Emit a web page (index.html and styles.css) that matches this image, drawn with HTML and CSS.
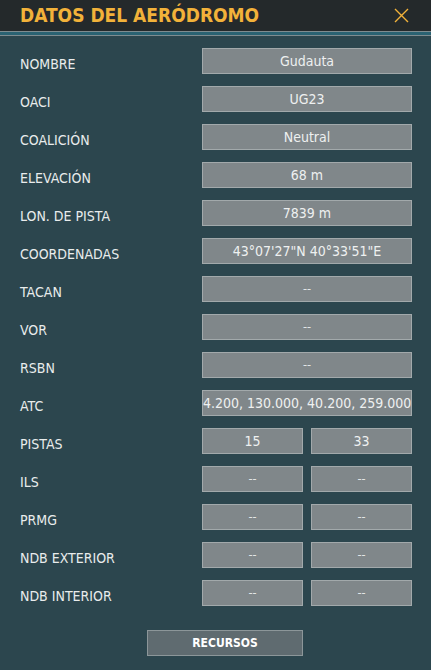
FILE: index.html
```html
<!DOCTYPE html>
<html lang="es">
<head>
<meta charset="utf-8">
<title>Datos del aeródromo</title>
<link rel="stylesheet" href="styles.css">
</head>
<body>
<div class="window">
  <header class="header">
    <h1 class="title">DATOS DEL AERÓDROMO</h1>
    <button class="close" aria-label="Cerrar">
      <svg width="15" height="15" viewBox="0 0 15 15"><path d="M1 1 L14 14 M14 1 L1 14" stroke="#f2b23a" stroke-width="1.4" fill="none"/></svg>
    </button>
  </header>
  <div class="divider"></div>
  <main class="content">
    <div class="rows">
      <div class="label">NOMBRE</div><div class="field">Gudauta</div>
      <div class="label">OACI</div><div class="field">UG23</div>
      <div class="label">COALICIÓN</div><div class="field">Neutral</div>
      <div class="label">ELEVACIÓN</div><div class="field">68 m</div>
      <div class="label">LON. DE PISTA</div><div class="field">7839 m</div>
      <div class="label">COORDENADAS</div><div class="field">43°07'27"N 40°33'51"E</div>
      <div class="label">TACAN</div><div class="field dash">--</div>
      <div class="label">VOR</div><div class="field dash">--</div>
      <div class="label">RSBN</div><div class="field dash">--</div>
      <div class="label">ATC</div><div class="field">4.200, 130.000, 40.200, 259.000</div>
      <div class="label">PISTAS</div><div class="pair"><div class="field">15</div><div class="field">33</div></div>
      <div class="label">ILS</div><div class="pair"><div class="field dash">--</div><div class="field dash">--</div></div>
      <div class="label">PRMG</div><div class="pair"><div class="field dash">--</div><div class="field dash">--</div></div>
      <div class="label">NDB EXTERIOR</div><div class="pair"><div class="field dash">--</div><div class="field dash">--</div></div>
      <div class="label">NDB INTERIOR</div><div class="pair"><div class="field dash">--</div><div class="field dash">--</div></div>
    </div>
    <div class="actions">
      <button class="btn">RECURSOS</button>
    </div>
  </main>
</div>
</body>
</html>
```

FILE: styles.css
```css
html, body {
  margin: 0;
  padding: 0;
  background: #2c464e;
  font-family: "DejaVu Sans Condensed", "DejaVu Sans", sans-serif;
  font-stretch: condensed;
}
.window {
  width: 431px;
  min-height: 670px;
  background: #2c464e;
}
.header {
  height: 31px;
  background: #24292b;
  display: flex;
  align-items: center;
  justify-content: space-between;
  padding: 0 22px 0 20px;
  box-sizing: border-box;
}
.title {
  margin: 0;
  font-size: 19px;
  font-weight: 700;
  color: #f2b23a;
  line-height: 31px;
}
.close {
  background: none;
  border: 0;
  padding: 0;
  width: 15px;
  height: 15px;
  display: flex;
}
.divider {
  height: 3px;
  background: #2a6272;
  border-top: 1px solid #7f8c90;
  border-bottom: 1px solid #7f8c90;
}
.content {
  padding: 12px 19px 0 20px;
}
.rows {
  display: grid;
  grid-template-columns: 182px 210px;
  grid-auto-rows: 26px;
  row-gap: 12px;
}
.label {
  color: #e9ecec;
  font-size: 14px;
  line-height: 18px;
  padding-top: 7px;
  white-space: nowrap;
}
.field {
  background: #80878a;
  border: 1px solid #a2a9ab;
  box-sizing: border-box;
  height: 26px;
  color: #eef0f0;
  font-size: 14px;
  line-height: 24px;
  text-align: center;
  white-space: nowrap;
  overflow: hidden;
}
.field.dash {
  font-size: 12.5px;
  color: #e2e5e6;
}
.pair {
  display: grid;
  grid-template-columns: 1fr 1fr;
  column-gap: 8px;
}
.actions {
  display: flex;
  padding: 24px 0 0 127px;
}
.btn {
  width: 156px;
  height: 26px;
  background: #5f6b70;
  border: 1px solid #8c9699;
  color: #ffffff;
  font-family: "DejaVu Sans Condensed", "DejaVu Sans", sans-serif;
  font-stretch: condensed;
  font-weight: 700;
  font-size: 12px;
  padding: 0;
}
```
